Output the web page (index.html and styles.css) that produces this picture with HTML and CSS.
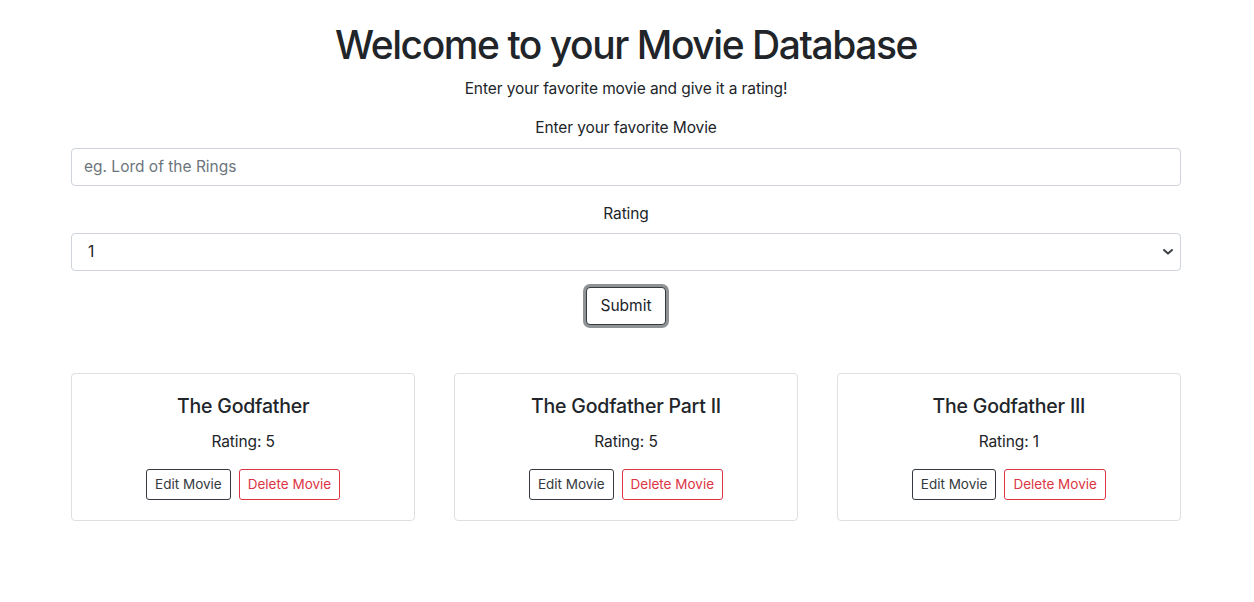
FILE: index.html
```html
<!DOCTYPE html>
<html lang="en">
<head>
<meta charset="utf-8">
<title>Movie Database</title>
<link rel="stylesheet" href="styles.css">
</head>
<body>
<div class="container">
  <h1 class="title">Welcome to your Movie Database</h1>
  <p class="lead-text">Enter your favorite movie and give it a rating!</p>
  <form class="movie-form">
    <div class="form-group">
      <label class="form-label" for="movie">Enter your favorite Movie</label>
      <input class="form-control" id="movie" type="text" placeholder="eg. Lord of the Rings">
    </div>
    <div class="form-group">
      <label class="form-label" for="rating">Rating</label>
      <div class="select-wrap">
        <select class="form-control form-select" id="rating">
          <option>1</option>
          <option>2</option>
          <option>3</option>
          <option>4</option>
          <option>5</option>
        </select>
        <svg class="select-arrow" width="10" height="6" viewBox="0 0 10 6"><path d="M1 1l4 3.6L9 1" fill="none" stroke="#3d4247" stroke-width="2" stroke-linecap="round" stroke-linejoin="round"/></svg>
      </div>
    </div>
    <div class="submit-row">
      <button type="button" class="btn btn-submit">Submit</button>
    </div>
  </form>
  <div class="cards">
    <div class="card">
      <h5 class="card-title">The Godfather</h5>
      <p class="card-text">Rating: 5</p>
      <div class="card-actions">
        <button type="button" class="btn btn-sm btn-dark-outline">Edit Movie</button>
        <button type="button" class="btn btn-sm btn-danger-outline">Delete Movie</button>
      </div>
    </div>
    <div class="card">
      <h5 class="card-title">The Godfather Part II</h5>
      <p class="card-text">Rating: 5</p>
      <div class="card-actions">
        <button type="button" class="btn btn-sm btn-dark-outline">Edit Movie</button>
        <button type="button" class="btn btn-sm btn-danger-outline">Delete Movie</button>
      </div>
    </div>
    <div class="card">
      <h5 class="card-title">The Godfather III</h5>
      <p class="card-text">Rating: 1</p>
      <div class="card-actions">
        <button type="button" class="btn btn-sm btn-dark-outline">Edit Movie</button>
        <button type="button" class="btn btn-sm btn-danger-outline">Delete Movie</button>
      </div>
    </div>
  </div>
</div>
</body>
</html>
```
FILE: styles.css
```css
* { box-sizing: border-box; }
html, body { margin: 0; padding: 0; background: #fff; }
body {
  font-family: Inter, "Noto Sans", "Liberation Sans", sans-serif;
  font-size: 16px;
  line-height: 1.5;
  color: #212529;
}
.container {
  width: 1112px;
  margin: 0 auto;
  padding: 21px 2px 0 0;
  text-align: center;
}
.title {
  margin: 0 0 8px;
  font-size: 39px;
  line-height: 48px;
  font-weight: 500;
  letter-spacing: -1.45px;
}
.lead-text {
  margin: 0 0 16px;
  font-size: 15.5px;
  letter-spacing: -0.1px;
}
.movie-form { margin: 0 0 48px; }
.form-group { margin-bottom: 16px; }
.form-label {
  display: block;
  margin-bottom: 8px;
  font-size: 15.5px;
  letter-spacing: -0.1px;
}
.form-control {
  display: block;
  width: 100%;
  height: 38px;
  padding: 6px 12px;
  font-family: inherit;
  font-size: 15.5px;
  line-height: 24px;
  color: #495057;
  background: #fff;
  border: 1px solid #ced4da;
  border-radius: 4px;
  text-align: left;
  outline: none;
}
.form-control::placeholder { color: #6c757d; opacity: 1; }
.select-wrap { position: relative; }
.form-select {
  -webkit-appearance: none;
  appearance: none;
  padding-left: 16px;
  color: #212529;
}
.select-arrow {
  position: absolute;
  right: 8px;
  top: 16px;
  pointer-events: none;
}
.submit-row { display: flex; justify-content: center; }
.btn {
  display: inline-block;
  font-family: inherit;
  font-size: 15.5px;
  line-height: 24px;
  padding: 6px 12px;
  border: 1px solid transparent;
  border-radius: 4px;
  background: #fff;
  cursor: pointer;
}
.btn-submit {
  color: #212529;
  border-color: #343a40;
  padding: 6px 13px;
  box-shadow: 0 0 0 3px rgba(52, 58, 64, 0.55);
}
.cards {
  display: grid;
  grid-template-columns: repeat(3, 1fr);
  gap: 38.5px;
}
.card {
  border: 1px solid #dfdfdf;
  border-radius: 4px;
  padding: 20px;
  text-align: center;
}
.card-title {
  margin: 0 0 12px;
  font-size: 19.5px;
  line-height: 24px;
  font-weight: 500;
  letter-spacing: -0.2px;
}
.card-text {
  margin: 0 0 16px;
  font-size: 15.5px;
  letter-spacing: -0.1px;
}
.card-actions {
  display: flex;
  justify-content: center;
  gap: 8px;
}
.btn-sm {
  font-size: 13.5px;
  line-height: 21px;
  height: 31px;
  padding: 4px 8px;
  border-radius: 3px;
}
.btn-dark-outline { color: #343a40; border-color: #343a40; }
.btn-danger-outline { color: #dc3545; border-color: #dc3545; }
```
